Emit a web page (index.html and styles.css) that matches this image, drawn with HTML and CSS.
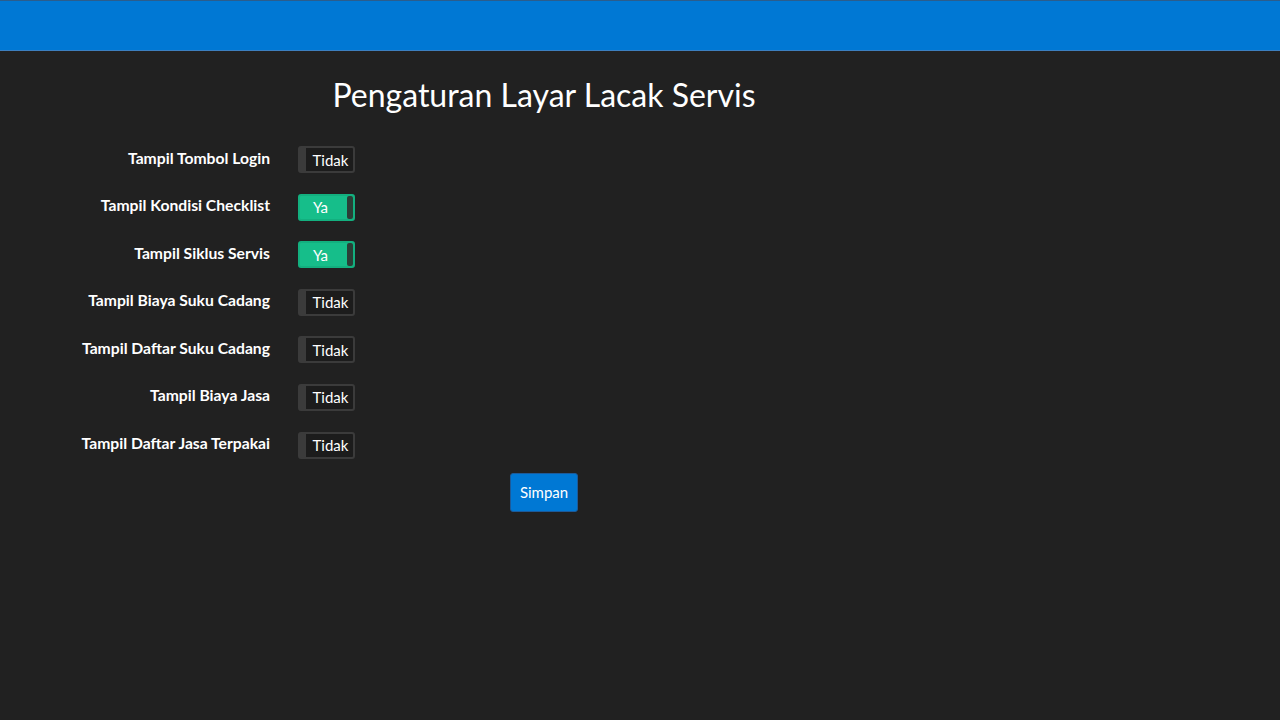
FILE: index.html
```html
<!DOCTYPE html>
<html lang="id">
<head>
    <meta charset="UTF-8">
    <meta name="viewport" content="width=device-width, initial-scale=1.0">
    <title>Pengaturan Layar Lacak Servis</title>
    <link rel="stylesheet" href="styles.css">
</head>
<body>
    <div class="topbar"></div>

    <div class="main">
        <h1 class="title">Pengaturan Layar Lacak Servis</h1>

        <div class="settings">
            <label class="setting-label">Tampil Tombol Login</label>
            <button class="toggle">Tidak</button>

            <label class="setting-label">Tampil Kondisi Checklist</label>
            <button class="toggle on">Ya</button>

            <label class="setting-label">Tampil Siklus Servis</label>
            <button class="toggle on">Ya</button>

            <label class="setting-label">Tampil Biaya Suku Cadang</label>
            <button class="toggle">Tidak</button>

            <label class="setting-label">Tampil Daftar Suku Cadang</label>
            <button class="toggle">Tidak</button>

            <label class="setting-label">Tampil Biaya Jasa</label>
            <button class="toggle">Tidak</button>

            <label class="setting-label">Tampil Daftar Jasa Terpakai</label>
            <button class="toggle">Tidak</button>
        </div>

        <div class="actions">
            <button class="save-button">Simpan</button>
        </div>
    </div>

    <script>
        document.querySelectorAll('.toggle').forEach(function(btn) {
            btn.addEventListener('click', function() {
                btn.classList.toggle('on');
                btn.textContent = btn.classList.contains('on') ? 'Ya' : 'Tidak';
            });
        });
    </script>
</body>
</html>
```

FILE: styles.css
```css
:root {
    --bg: #212121;
    --text: #ffffff;
    --accent: #0078d4;
    --green: #16be8a;
}

body {
    margin: 0;
    padding: 0;
    font-family: 'Lato', 'Open Sans', sans-serif;
    background-color: var(--bg);
    color: var(--text);
}

.topbar {
    height: 49px;
    background-color: var(--accent);
    border-top: 1px solid #2b5d8c;
    border-bottom: 1px solid #3d7fbf;
}

.main {
    width: 85%;
}

.title {
    margin: 25px 0 32px;
    font-size: 32px;
    font-weight: 400;
    text-align: center;
    line-height: 38px;
}

.settings {
    display: grid;
    grid-template-columns: 270px auto;
    column-gap: 28px;
    row-gap: 20.6px;
    align-items: center;
    justify-items: start;
}

.setting-label {
    justify-self: end;
    font-size: 15.7px;
    font-weight: 700;
    margin-top: -4px;
}

.toggle {
    box-sizing: border-box;
    width: 57px;
    height: 27px;
    padding: 0 0 0 8px;
    border: 2px solid #3b3b3b;
    border-radius: 3px;
    background-color: #1c1c1c;
    color: var(--text);
    font-family: 'Lato', sans-serif;
    font-size: 15px;
    cursor: pointer;
    position: relative;
}

.toggle::before {
    content: '';
    position: absolute;
    top: 0;
    bottom: 0;
    left: 0;
    width: 6px;
    background-color: #3b3b3b;
}

.toggle.on {
    background-color: var(--green);
    border-color: #13b07f;
    padding: 0 12px 0 0;
}

.toggle.on::before {
    left: auto;
    right: 0;
    width: 6px;
    background-color: #2b3f37;
    border-radius: 2px;
}

.actions {
    display: flex;
    justify-content: center;
    margin-top: 14px;
}

.save-button {
    box-sizing: border-box;
    width: 68px;
    height: 39px;
    background-color: var(--accent);
    color: var(--text);
    border: 1px solid #1d5a99;
    border-radius: 3px;
    font-family: 'Lato', sans-serif;
    font-size: 15px;
    cursor: pointer;
}
```
